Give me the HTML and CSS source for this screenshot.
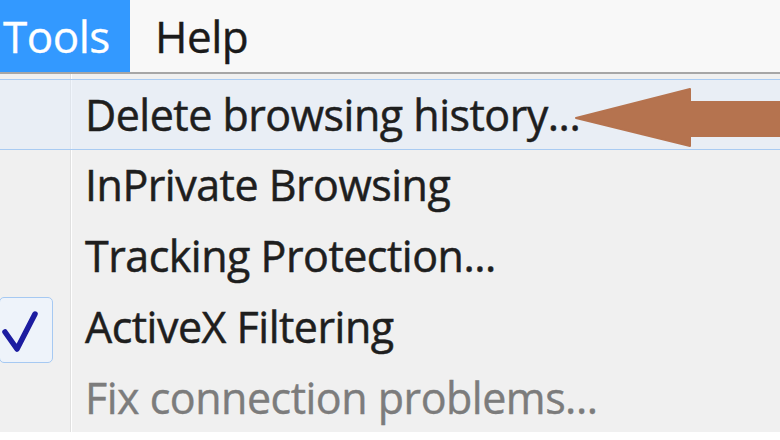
FILE: index.html
```html
<!DOCTYPE html>
<html lang="en">
<head>
<meta charset="UTF-8">
<title>Tools menu</title>
<link rel="stylesheet" href="styles.css">
</head>
<body>
<div class="menubar">
    <div class="menu-title active">Tools</div>
    <div class="menu-title">Help</div>
</div>
<div class="menu">
    <div class="item hover">
        <div class="gutter"></div>
        <div class="label">Delete browsing history...</div>
    </div>
    <div class="item">
        <div class="gutter"></div>
        <div class="label">InPrivate Browsing</div>
    </div>
    <div class="item">
        <div class="gutter"></div>
        <div class="label">Tracking Protection...</div>
    </div>
    <div class="item">
        <div class="gutter">
            <span class="check">
                <svg width="54" height="66" viewBox="0 0 54 66">
                    <path d="M6 35 L18 52 L36 17" fill="none" stroke="#1c1ca0" stroke-width="5.5" stroke-linecap="round" stroke-linejoin="round"/>
                </svg>
            </span>
        </div>
        <div class="label">ActiveX Filtering</div>
    </div>
    <div class="item disabled">
        <div class="gutter"></div>
        <div class="label">Fix connection problems...</div>
    </div>
</div>

<!-- annotation arrow drawn over the screenshot -->
<svg class="arrow" width="780" height="440" viewBox="0 0 780 440">
    <polygon points="576,118 690,89 690,102 780,102 780,136 690,136 690,146" fill="#b5734f" stroke="#b5734f" stroke-width="2" stroke-linejoin="round"/>
</svg>
</body>
</html>
```

FILE: styles.css
```css
body {
    margin: 0;
    width: 780px;
    height: 440px;
    overflow: hidden;
    background: #fff;
    font-family: "Open Sans", "Noto Sans", Arial, sans-serif;
    position: relative;
}

.menubar {
    display: flex;
    height: 72px;
    background: #f8f8f8;
    border-bottom: 2px solid #a6a6a6;
}

.menu-title {
    display: flex;
    align-items: center;
    padding: 0 22px 0 3px;
    font-size: 44px;
    color: #1a1a1a;
    letter-spacing: -0.5px;
    -webkit-text-stroke: 0.4px #1a1a1a;
}

.menu-title.active {
    background: #3399ff;
    color: #fff;
    width: 105px;
    -webkit-text-stroke: 0.3px #fff;
}

.menu-title + .menu-title {
    padding-left: 25px;
}

.menu {
    height: 358px;
    overflow: hidden;
    padding-top: 5px;
    box-sizing: border-box;
    background:
        linear-gradient(to right, transparent 70px, #e0e0e0 70px, #e0e0e0 71px, #fff 71px, #fff 72px, transparent 72px),
        #f0f0f0;
}

.item {
    display: flex;
    height: 71px;
    box-sizing: border-box;
}

.item.hover {
    border-top: 1px solid #a9cbf2;
    border-bottom: 1px solid #a9cbf2;
    background: rgba(225, 235, 250, 0.45);
}

.gutter {
    width: 70px;
    flex: none;
    position: relative;
}

.label {
    padding-left: 15px;
    font-size: 43px;
    line-height: 70px;
    color: #1e1e1e;
    letter-spacing: -0.5px;
    white-space: nowrap;
    -webkit-text-stroke: 0.5px #1e1e1e;
}

.disabled .label {
    color: #7c7c7c;
    -webkit-text-stroke: 0.4px #7c7c7c;
}

.check {
    display: block;
    width: 54px;
    height: 66px;
    margin: 5px 0 0 -1px;
    box-sizing: border-box;
    border: 1.5px solid #a6c9f2;
    border-radius: 5px;
    background: #eef3fa;
}

.check svg {
    display: block;
    margin: -1.5px;
}

.arrow {
    position: absolute;
    left: 0;
    top: 0;
    pointer-events: none;
}
```
